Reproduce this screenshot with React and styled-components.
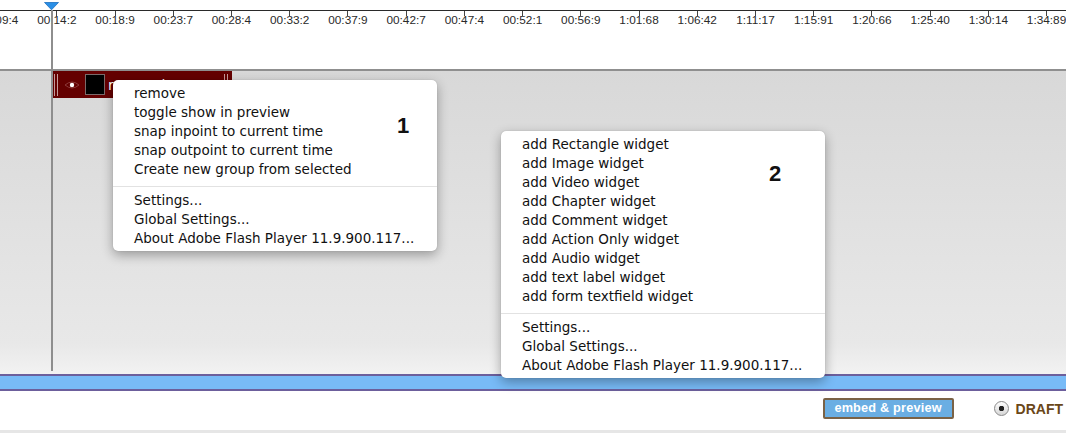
import React from "react";
import styled, { createGlobalStyle } from "styled-components";

const Global = createGlobalStyle`
  html, body { margin: 0; padding: 0; background: #fff; }
  body { overflow: hidden; font-family: "Liberation Sans", Arial, sans-serif; }
`;

const Page = styled.div`
  position: relative;
  width: 1066px;
  height: 433px;
  overflow: hidden;
  display: flex;
  flex-direction: column;
  background: #fff;
`;

const Ruler = styled.div`
  height: 69px;
  flex-shrink: 0;
  background: #fff;
  display: flex;
  flex-direction: column;
`;

const RulerTop = styled.div`
  height: 10px;
  border-bottom: 1px solid #2a2a2a;
`;

const TickRow = styled.div`
  display: flex;
  margin-left: -30.5px;
`;

const TickCell = styled.div`
  width: 58.23px;
  flex-shrink: 0;
  display: flex;
  flex-direction: column;
  align-items: center;
`;

const TickMark = styled.div`
  width: 1px;
  height: 5px;
  background: #444;
  position: relative;
  z-index: 1;
`;

const TickLabel = styled.div`
  margin-top: -2px;
  font-size: 11.8px;
  line-height: 13px;
  color: #2a2a2a;
  white-space: nowrap;
`;

const Track = styled.div`
  flex: 1;
  border-top: 2px solid #8f8f8f;
  background: linear-gradient(#d8d8d8, #e8e8e8 90%, #f2f2f2);
  display: flex;
  flex-direction: column;
  align-items: flex-start;
`;

const Clip = styled.div`
  margin-left: 51px;
  width: 181px;
  height: 27px;
  background: #640000;
  display: flex;
  align-items: center;
  padding: 0 4px 0 3px;
  box-sizing: border-box;
`;

const Grip = styled.div`
  width: 4px;
  height: 22px;
  border-left: 1px solid #c49a9a;
  border-right: 1px solid #c49a9a;
  box-sizing: border-box;
  flex-shrink: 0;
`;

const Swatch = styled.div`
  width: 20px;
  height: 21px;
  background: #000;
  border: 1px solid #7a6a6a;
  box-sizing: border-box;
  margin-left: 5px;
  flex-shrink: 0;
`;

const ClipName = styled.div`
  color: #fff;
  font-family: "DejaVu Sans", sans-serif;
  font-size: 14px;
  margin-left: 3px;
  flex: 1;
  white-space: nowrap;
  overflow: hidden;
`;

const Timebar = styled.div`
  height: 13px;
  flex-shrink: 0;
  background: #78bbf7;
  border-top: 2px solid #6c5f9c;
  border-bottom: 2px solid #6c5f9c;
`;

const Footer = styled.div`
  height: 32px;
  flex-shrink: 0;
  border-bottom: 3px solid #e6e6e6;
  display: flex;
  justify-content: flex-end;
  align-items: flex-start;
  padding: 7px 3px 0 0;
`;

const EmbedButton = styled.button`
  width: 131px;
  height: 21px;
  background: #6aaee3;
  border: 2px solid #7a6246;
  border-radius: 2px;
  color: #fff;
  font-family: "Liberation Sans", Arial, sans-serif;
  font-weight: bold;
  font-size: 12.7px;
  letter-spacing: 0.2px;
  padding: 0;
  line-height: 17px;
`;

const DraftGroup = styled.div`
  display: flex;
  align-items: center;
  margin-left: 40px;
  gap: 7px;
  height: 21px;
`;

const Radio = styled.div`
  width: 13px;
  height: 13px;
  border-radius: 50%;
  border: 1px solid #8a8a8a;
  background: radial-gradient(#222 0 2.5px, transparent 3px), linear-gradient(#ffffff, #d6d6d6);
`;

const DraftLabel = styled.span`
  font-family: "Liberation Sans", Arial, sans-serif;
  font-weight: bold;
  font-size: 14px;
  color: #6a4719;
`;

const Playhead = styled.div`
  position: absolute;
  left: 44px;
  top: 2px;
  width: 15px;
  display: flex;
  flex-direction: column;
  align-items: center;
  pointer-events: none;
`;

const PlayheadLine = styled.div`
  width: 2px;
  height: 361px;
  background: #8e8e8e;
`;

const Menu = styled.div`
  position: absolute;
  left: ${(p) => p.$x}px;
  top: ${(p) => p.$y}px;
  width: 324px;
  box-sizing: border-box;
  background: #fff;
  border-radius: 5px;
  box-shadow: 0 4px 12px rgba(0, 0, 0, 0.33), 0 0 1px rgba(0, 0, 0, 0.25);
  padding: 4px 0 3px;
  font-family: "DejaVu Sans", "Lucida Grande", sans-serif;
  font-size: 13.5px;
  color: #111;
`;

const MenuItem = styled.div`
  height: 19px;
  line-height: 19px;
  padding-left: 21px;
  white-space: nowrap;
`;

const MenuSep = styled.div`
  height: 1px;
  background: #e2e2e2;
  margin: 7px 0 4px;
`;

const MenuTag = styled.div`
  position: absolute;
  left: ${(p) => p.$x}px;
  top: ${(p) => p.$y}px;
  font-family: "Liberation Sans", Arial, sans-serif;
  font-weight: bold;
  font-size: 22px;
  line-height: 22px;
  color: #111;
`;

const labels = [
  "00:09:4", "00:14:2", "00:18:9", "00:23:7", "00:28:4", "00:33:2", "00:37:9",
  "00:42:7", "00:47:4", "00:52:1", "00:56:9", "1:01:68", "1:06:42", "1:11:17",
  "1:15:91", "1:20:66", "1:25:40", "1:30:14", "1:34:89",
];

const footerItems = ["Settings...", "Global Settings...", "About Adobe Flash Player 11.9.900.117..."];

const menu1 = [
  "remove",
  "toggle show in preview",
  "snap inpoint to current time",
  "snap outpoint to current time",
  "Create new group from selected",
];

const menu2 = [
  "add Rectangle widget",
  "add Image widget",
  "add Video widget",
  "add Chapter widget",
  "add Comment widget",
  "add Action Only widget",
  "add Audio widget",
  "add text label widget",
  "add form textfield widget",
];

function EyeIcon() {
  return (
    <svg width="16" height="10" viewBox="0 0 16 10" style={{ marginLeft: 6, flexShrink: 0 }}>
      <path d="M1 5 Q8 -1 15 5 Q8 11 1 5 Z" fill="none" stroke="#8c3a3a" strokeWidth="1" />
      <circle cx="8" cy="5" r="2.2" fill="#fff" />
    </svg>
  );
}

function ContextMenu({ x, y, items, tag, tagX, tagY }) {
  return (
    <Menu $x={x} $y={y}>
      {items.map((t) => (
        <MenuItem key={t}>{t}</MenuItem>
      ))}
      <MenuSep />
      {footerItems.map((t) => (
        <MenuItem key={t}>{t}</MenuItem>
      ))}
      <MenuTag $x={tagX} $y={tagY}>{tag}</MenuTag>
    </Menu>
  );
}

export default function App() {
  return (
    <>
      <Global />
      <Page>
        <Ruler>
          <RulerTop />
          <TickRow>
            {labels.map((l) => (
              <TickCell key={l}>
                <TickMark />
                <TickLabel>{l}</TickLabel>
              </TickCell>
            ))}
          </TickRow>
        </Ruler>
        <Track>
          <Clip>
            <Grip />
            <EyeIcon />
            <Swatch />
            <ClipName>rectangle</ClipName>
            <Grip />
          </Clip>
        </Track>
        <Timebar />
        <Footer>
          <EmbedButton>embed &amp; preview</EmbedButton>
          <DraftGroup>
            <Radio />
            <DraftLabel>DRAFT</DraftLabel>
          </DraftGroup>
        </Footer>

        <Playhead>
          <svg width="15" height="8" viewBox="0 0 15 8">
            <path d="M0.5 0.5 H14.5 L7.5 7.8 Z" fill="#2a8fe6" stroke="#1c6fbf" strokeWidth="0.8" />
          </svg>
          <PlayheadLine />
        </Playhead>

        <ContextMenu x={113} y={80} items={menu1} tag="1" tagX={284} tagY={35} />
        <ContextMenu x={501} y={131} items={menu2} tag="2" tagX={268} tagY={32} />
      </Page>
    </>
  );
}
